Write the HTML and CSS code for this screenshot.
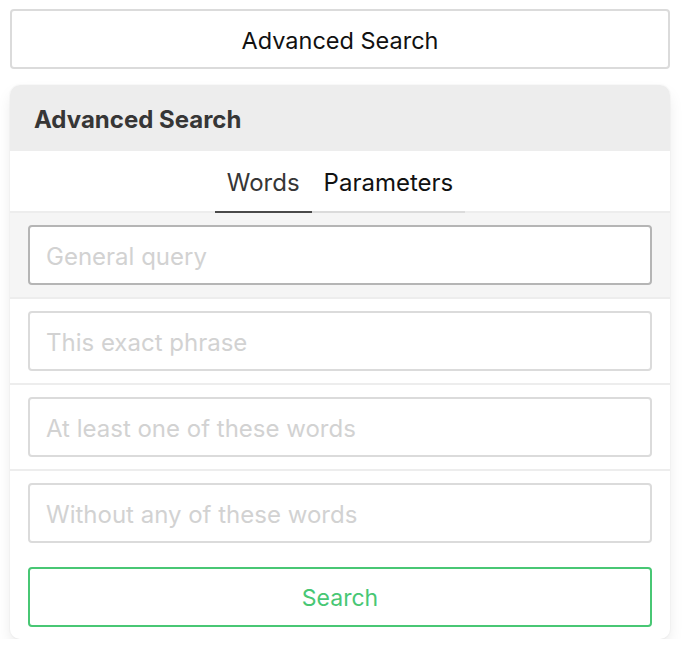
FILE: index.html
```html
<!DOCTYPE html>
<html lang="en">
<head>
<meta charset="utf-8">
<title>Advanced Search</title>
<link rel="stylesheet" href="styles.css">
</head>
<body>
<div class="page">
  <button class="toggle" type="button">Advanced Search</button>
  <nav class="panel">
    <p class="panel-heading">Advanced Search</p>
    <div class="panel-tabs">
      <a class="tab is-active">Words</a>
      <a class="tab">Parameters</a>
    </div>
    <div class="panel-block is-hovered">
      <input class="input is-hovered" type="text" placeholder="General query">
    </div>
    <div class="panel-block">
      <input class="input" type="text" placeholder="This exact phrase">
    </div>
    <div class="panel-block">
      <input class="input" type="text" placeholder="At least one of these words">
    </div>
    <div class="panel-block last">
      <input class="input" type="text" placeholder="Without any of these words">
      <button class="search" type="button">Search</button>
    </div>
  </nav>
</div>
</body>
</html>
```

FILE: styles.css
```css
* { box-sizing: border-box; }

html, body {
  margin: 0;
  padding: 0;
  background: #ffffff;
}

body {
  font-family: Inter, "Noto Sans", "Liberation Sans", sans-serif;
  color: #363636;
}

.page {
  width: 660px;
  margin: 9px 0 0 10px;
  display: flex;
  flex-direction: column;
  gap: 16px;
}

.toggle {
  height: 60px;
  width: 100%;
  background: #fff;
  border: 2px solid #dbdbdb;
  border-radius: 4px;
  font-family: inherit;
  font-size: 23.5px;
  color: #111;
  padding: 2px 0 0;
}

.panel {
  border-radius: 10px;
  background: #fff;
  box-shadow: 0 8px 16px -2px rgba(10, 10, 10, 0.1), 0 0 0 1px rgba(10, 10, 10, 0.02);
  overflow: hidden;
}

.panel-heading {
  margin: 0;
  height: 66px;
  display: flex;
  align-items: center;
  padding: 2px 24px 0 24px;
  background: #ededed;
  color: #363636;
  font-weight: 700;
  font-size: 24px;
}

.panel-tabs {
  display: flex;
  justify-content: center;
  border-bottom: 2px solid #ededed;
  height: 62px;
}

.tab {
  display: flex;
  align-items: center;
  padding: 2px 12px 0;
  height: 62px;
  border-bottom: 2px solid #dbdbdb;
  font-size: 24px;
  color: #111;
}

.tab.is-active {
  border-bottom-color: #4a4a4a;
  color: #363636;
}

.panel-block {
  padding: 12px 18px;
  border-bottom: 2px solid #ededed;
  display: flex;
  flex-direction: column;
  gap: 24px;
}

.panel-block.is-hovered {
  background: #f5f5f5;
}

.panel-block.last {
  border-bottom: none;
}

.input {
  height: 60px;
  width: 100%;
  border: 2px solid #dbdbdb;
  border-radius: 4px;
  background: #fff;
  padding: 2px 16px 0;
  font-family: inherit;
  font-size: 24px;
  color: #363636;
  outline: none;
}

.input.is-hovered {
  border-color: #b5b5b5;
}

.input::placeholder {
  color: #d2d2d2;
}

.search {
  height: 60px;
  width: 100%;
  background: #fff;
  border: 2px solid #48c774;
  border-radius: 4px;
  color: #48c774;
  font-family: inherit;
  font-size: 23px;
  padding: 2px 0 0;
}
```
